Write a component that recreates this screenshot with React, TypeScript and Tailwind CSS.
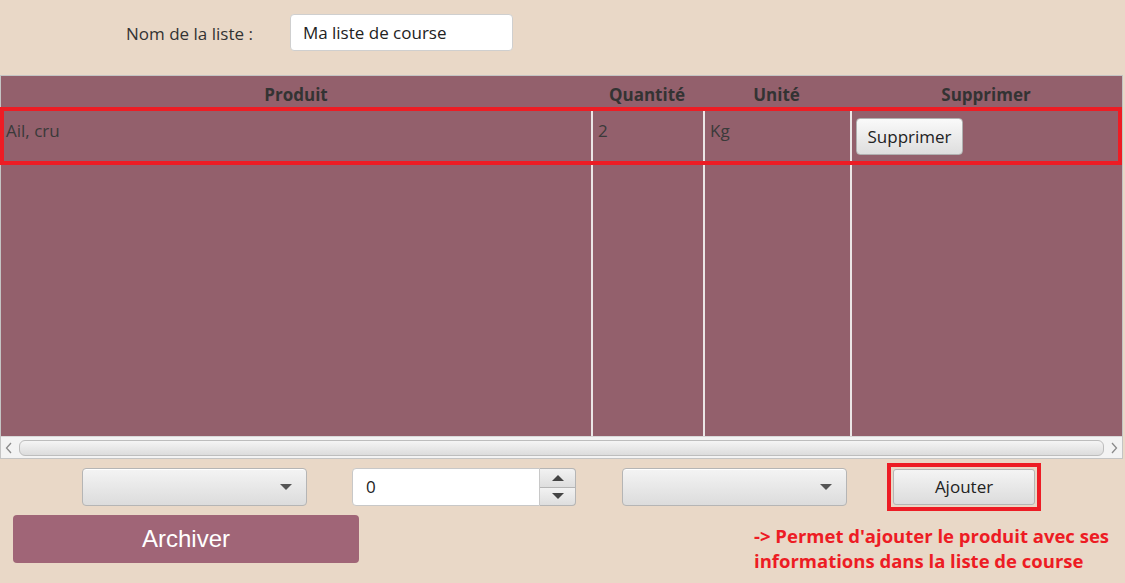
import React from 'react';

const ComboBox: React.FC = () => (
  <div className="flex h-[38px] w-[225px] items-center justify-end rounded-[4px] border border-[#b5b5b5] bg-gradient-to-b from-[#f4f4f4] to-[#dcdcdc] pr-[14px] shadow-[inset_0_1px_0_#ffffff]">
    <span className="h-0 w-0 border-x-[6px] border-t-[6px] border-x-transparent border-t-[#555]" />
  </div>
);

const Spinner: React.FC = () => (
  <div className="flex h-[38px] w-[224px]">
    <div className="flex flex-1 items-center rounded-l-[4px] border border-[#c8c8c8] bg-white pl-[13px] text-[17px] text-[#222]">
      0
    </div>
    <div className="flex w-[36px] flex-col">
      <div className="flex flex-1 items-center justify-center rounded-tr-[4px] border border-l-0 border-[#b5b5b5] bg-gradient-to-b from-[#f2f2f2] to-[#dedede]">
        <span className="h-0 w-0 border-x-[6px] border-b-[6px] border-x-transparent border-b-[#444]" />
      </div>
      <div className="flex flex-1 items-center justify-center rounded-br-[4px] border border-l-0 border-t-0 border-[#b5b5b5] bg-gradient-to-b from-[#f2f2f2] to-[#dedede]">
        <span className="h-0 w-0 border-x-[6px] border-t-[6px] border-x-transparent border-t-[#444]" />
      </div>
    </div>
  </div>
);

const Chevron: React.FC<{ dir: 'left' | 'right' }> = ({ dir }) => (
  <svg width="8" height="12" viewBox="0 0 8 12" className="shrink-0">
    <path
      d={dir === 'left' ? 'M6 1 L1.5 6 L6 11' : 'M2 1 L6.5 6 L2 11'}
      fill="none"
      stroke="#8a8a8a"
      strokeWidth="1.3"
    />
  </svg>
);

export default function App() {
  const cols = 'grid grid-cols-[590px_112px_147px_1fr]';
  return (
    <div className="flex h-[583px] w-[1125px] flex-col overflow-hidden bg-[#e9d8c7] font-['Open_Sans',sans-serif] text-[#333]">
      {/* nom de la liste */}
      <div className="flex h-[75px] items-start pt-[14px]">
        <span className="ml-[126px] mt-[7px] text-[17px]">Nom de la liste :</span>
        <div className="ml-[37px] flex h-[37px] w-[223px] items-center rounded-[4px] border border-[#cfcfcf] bg-white pl-[12px] text-[17px] text-[#222]">
          Ma liste de course
        </div>
      </div>

      {/* table */}
      <div className="relative mr-[2px] flex h-[384px] flex-col border border-[#c4c4c4] bg-[#93606c]">
        <div className={`${cols} h-[32px] items-center pt-[6px] text-[17px] font-bold text-[#333]`}>
          <span className="text-center">Produit</span>
          <span className="text-center">Quantité</span>
          <span className="text-center">Unité</span>
          <span className="text-center">Supprimer</span>
        </div>
        <div className={`${cols} flex-1 text-[17px] text-[#3a3a3a]`}>
          <div className="pl-[5px] pt-[10px]">Ail, cru</div>
          <div className="border-l-2 border-[#ebe6e6] pl-[5px] pt-[10px]">2</div>
          <div className="border-l-2 border-[#ebe6e6] pl-[5px] pt-[10px]">Kg</div>
          <div className="border-l-2 border-[#ebe6e6] pl-[4px] pt-[10px]">
            <div className="flex h-[37px] w-[107px] items-center justify-center rounded-[4px] border border-[#b0b0b0] bg-gradient-to-b from-[#fafafa] to-[#dedede] text-[#222]">
              Supprimer
            </div>
          </div>
        </div>
        {/* scrollbar */}
        <div className="flex h-[22px] items-center gap-[6px] border-t border-[#d8d8d8] bg-[#f3f3f3] px-[4px]">
          <Chevron dir="left" />
          <div className="h-[16px] flex-1 rounded-[6px] border border-[#bdbdbd] bg-gradient-to-b from-[#f5f5f5] to-[#dcdcdc]" />
          <Chevron dir="right" />
        </div>
        {/* annotation */}
        <div className="absolute left-[-1px] top-[31px] h-[58px] w-[1122px] border-[4px] border-[#ed1c24]" />
      </div>

      {/* controls */}
      <div className="mt-[4px] flex items-center">
        <div className="ml-[82px]">
          <ComboBox />
        </div>
        <div className="ml-[45px]">
          <Spinner />
        </div>
        <div className="ml-[46px]">
          <ComboBox />
        </div>
        <div className="ml-[40px] border-[4px] border-[#ed1c24] px-[2px] py-[2px]">
          <div className="flex h-[36px] w-[142px] items-center justify-center rounded-[3px] border border-[#b5b5b5] bg-gradient-to-b from-[#f4f4f4] to-[#dcdcdc] text-[17px] text-[#222]">
            Ajouter
          </div>
        </div>
      </div>

      <div className="mt-[4px] flex items-start">
        <div className="ml-[13px] flex h-[48px] w-[346px] items-center justify-center rounded-[4px] bg-[#a06577] font-['Liberation_Sans',sans-serif] text-[24px] text-white">
          Archiver
        </div>
        <p className="ml-[395px] mt-[8px] whitespace-nowrap text-[18.5px] font-bold leading-[25px] text-[#ed1c24]">
          -&gt; Permet d'ajouter le produit avec ses
          <br />
          informations dans la liste de course
        </p>
      </div>
    </div>
  );
}
